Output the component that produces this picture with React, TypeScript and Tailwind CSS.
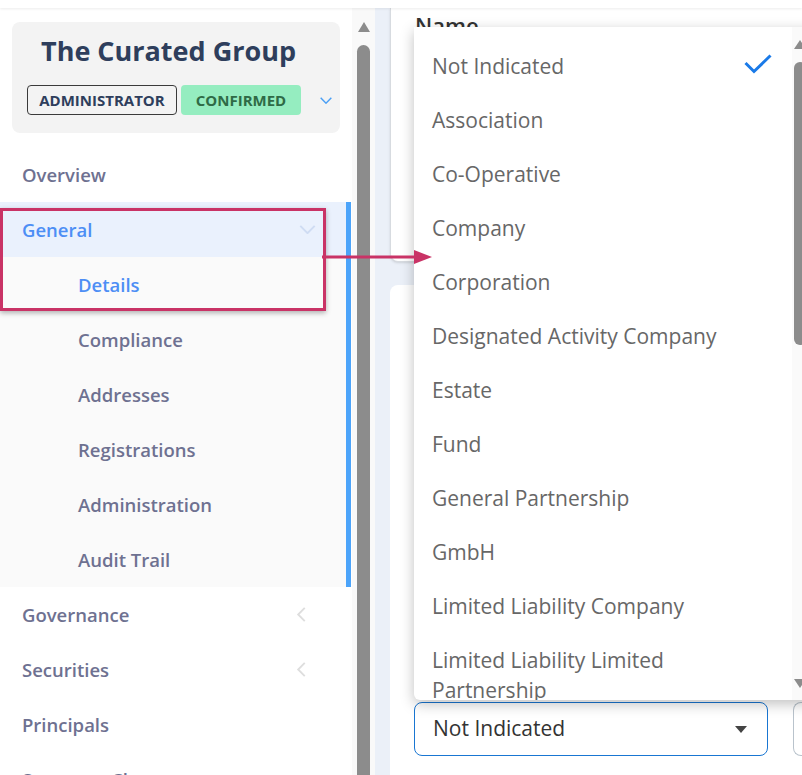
import React from "react";

const subItems = [
  "Details",
  "Compliance",
  "Addresses",
  "Registrations",
  "Administration",
  "Audit Trail",
];

const entityTypes = [
  "Not Indicated",
  "Association",
  "Co-Operative",
  "Company",
  "Corporation",
  "Designated Activity Company",
  "Estate",
  "Fund",
  "General Partnership",
  "GmbH",
  "Limited Liability Company",
  "Limited Liability Limited Partnership",
];

const ChevronDown = ({ className }: { className?: string }) => (
  <svg viewBox="0 0 18 10" className={className} fill="none" stroke="currentColor" strokeWidth="2.2">
    <polyline points="1,1 9,9 17,1" />
  </svg>
);

const ChevronLeft = ({ className }: { className?: string }) => (
  <svg viewBox="0 0 10 16" className={className} fill="none" stroke="currentColor" strokeWidth="2">
    <polyline points="9,1 2,8 9,15" />
  </svg>
);

const NavItem = ({
  label,
  sub,
  active,
  icon,
}: {
  label: string;
  sub?: boolean;
  active?: boolean;
  icon?: React.ReactNode;
}) => (
  <div
    className={`flex h-[55px] shrink-0 items-center justify-between pr-[24px] text-[18.5px] font-semibold ${
      sub ? "pl-[78px]" : "pl-[22px]"
    } ${active ? "text-[#4d8ef5]" : "text-[#6e7191]"}`}
  >
    <span>{label}</span>
    {icon}
  </div>
);

const Sidebar = () => (
  <aside className="flex w-[352px] shrink-0 flex-col bg-white">
    <div className="mx-[12px] mt-[14px] flex h-[111px] shrink-0 flex-col rounded-lg bg-[#f3f3f3] pl-[15px] pt-[11px]">
      <h1 className="pr-[30px] text-center text-[27px] font-bold leading-[36px] text-[#2e3e5c]">
        The Curated Group
      </h1>
      <div className="mt-[16px] flex items-center">
        <span className="flex h-[30px] w-[150px] shrink-0 items-center justify-center rounded border border-[#3a3a3a] text-[15px] font-bold text-[#2e3e5c]">
          ADMINISTRATOR
        </span>
        <span className="ml-[4px] flex h-[30px] w-[120px] shrink-0 items-center justify-center rounded bg-[#95edc0] text-[15px] font-bold text-[#2f6b46]">
          CONFIRMED
        </span>
        <ChevronDown className="ml-[19px] h-[7px] w-[12px] shrink-0 text-[#4a9ff5]" />
      </div>
    </div>
    <nav className="mt-[14px] flex shrink-0 flex-col">
      <div className="w-[346px]">
        <NavItem label="Overview" />
      </div>
      <div className="flex">
        <div className="w-[346px]">
          <div className="bg-[#eaf1fd]">
            <NavItem
              label="General"
              active
              icon={<ChevronDown className="mr-[6px] h-[9px] w-[17px] text-[#cfdcf3]" />}
            />
          </div>
          <div className="bg-[#fafafa]">
            {subItems.map((item, index) => (
              <NavItem key={item} label={item} sub active={index === 0} />
            ))}
          </div>
        </div>
        <div className="w-[5px] bg-[#4ca4fa]" />
      </div>
      <div className="w-[346px]">
        <NavItem
          label="Governance"
          icon={<ChevronLeft className="mr-[16px] h-[15px] w-[10px] text-[#dedede]" />}
        />
        <NavItem
          label="Securities"
          icon={<ChevronLeft className="mr-[16px] h-[15px] w-[10px] text-[#dedede]" />}
        />
        <NavItem label="Principals" />
        <NavItem label="Structure Chart" />
      </div>
    </nav>
  </aside>
);

const SidebarScroll = () => (
  <div className="flex w-[23px] shrink-0 flex-col items-center bg-[#f9f9f9] pl-[5px] pr-[5px]">
    <div className="mt-[14px] h-0 w-0 border-x-[6.5px] border-b-[10px] border-x-transparent border-b-[#8c8c8c]" />
    <div className="mt-[13px] w-[13px] flex-1 rounded-t-full bg-[#8c8c8c]" />
  </div>
);

const Main = () => (
  <main className="flex flex-1 flex-col bg-[#ebf0f8] pl-[15px]">
    <div className="h-[254px] shrink-0 rounded-bl-lg border-b border-l border-[#d7dbe0] bg-white pl-[24px] shadow-sm">
      <div className="pt-[1px] text-[22px] font-semibold text-[#333]">Name</div>
    </div>
    <div className="mt-[23px] flex flex-1 flex-col justify-end rounded-tl-lg bg-white pb-[19px] pl-[24px]">
      <div className="flex gap-[25px]">
        <div className="flex h-[54px] w-[354px] shrink-0 items-center justify-between rounded-lg border border-[#1976d2] pl-[18px] pr-[20px] text-[21px] text-[#333]">
          <span>Not Indicated</span>
          <div className="h-0 w-0 border-x-[6.5px] border-t-[7px] border-x-transparent border-t-[#444]" />
        </div>
        <div className="h-[54px] flex-1 rounded-l-lg border-y border-l border-[#b9c3cc]" />
      </div>
    </div>
  </main>
);

const Dropdown = () => (
  <div className="absolute left-[414px] top-[27px] flex h-[673px] w-[400px] overflow-hidden rounded-bl-md bg-white shadow-[0_4px_14px_rgba(0,0,0,0.25)]">
    <ul className="flex-1 pt-[12px]">
      {entityTypes.map((type, index) => (
        <li
          key={type}
          className="flex items-start justify-between py-[12px] pl-[18px] pr-[20px] text-[21px] leading-[30px] text-[#676767]"
        >
          <span className="max-w-[300px]">{type}</span>
          {index === 0 && (
            <svg viewBox="0 0 28 20" className="mt-[3px] h-[20px] w-[28px]" fill="none" stroke="#1a7ae8" strokeWidth="3">
              <polyline points="1.5,9 10,17.5 26.5,1.5" />
            </svg>
          )}
        </li>
      ))}
    </ul>
    <div className="flex w-[22px] flex-col items-start bg-[#fafafa] pl-[2px]">
      <div className="mt-[13px] h-0 w-0 border-x-[6px] border-b-[9px] border-x-transparent border-b-[#8c8c8c]" />
      <div className="mt-[13px] h-[283px] w-[12px] rounded-full bg-[#8c8c8c]" />
      <div className="mt-[334px] h-0 w-0 border-x-[6px] border-t-[9px] border-x-transparent border-t-[#8c8c8c]" />
    </div>
  </div>
);

const Annotation = () => (
  <>
    <div className="absolute left-0 top-[208px] h-[103px] w-[326px] border-[3px] border-[#c93366] shadow-[0_2px_5px_rgba(0,0,0,0.3)]" />
    <svg className="absolute left-[322px] top-[249px] h-[16px] w-[112px]" viewBox="0 0 112 16">
      <line x1="0" y1="8" x2="96" y2="8" stroke="#c93366" strokeWidth="3" />
      <polygon points="92,1 110,8 92,15" fill="#c93366" />
    </svg>
  </>
);

export default function App() {
  return (
    <div
      className="relative h-[775px] w-[802px] overflow-hidden bg-white"
      style={{ fontFamily: '"Open Sans", "Noto Sans", sans-serif' }}
    >
      <div className="relative z-10 h-[8px] bg-white shadow-[0_1px_3px_rgba(0,0,0,0.08)]" />
      <div className="flex h-[767px]">
        <Sidebar />
        <SidebarScroll />
        <Main />
      </div>
      <Dropdown />
      <Annotation />
    </div>
  );
}
